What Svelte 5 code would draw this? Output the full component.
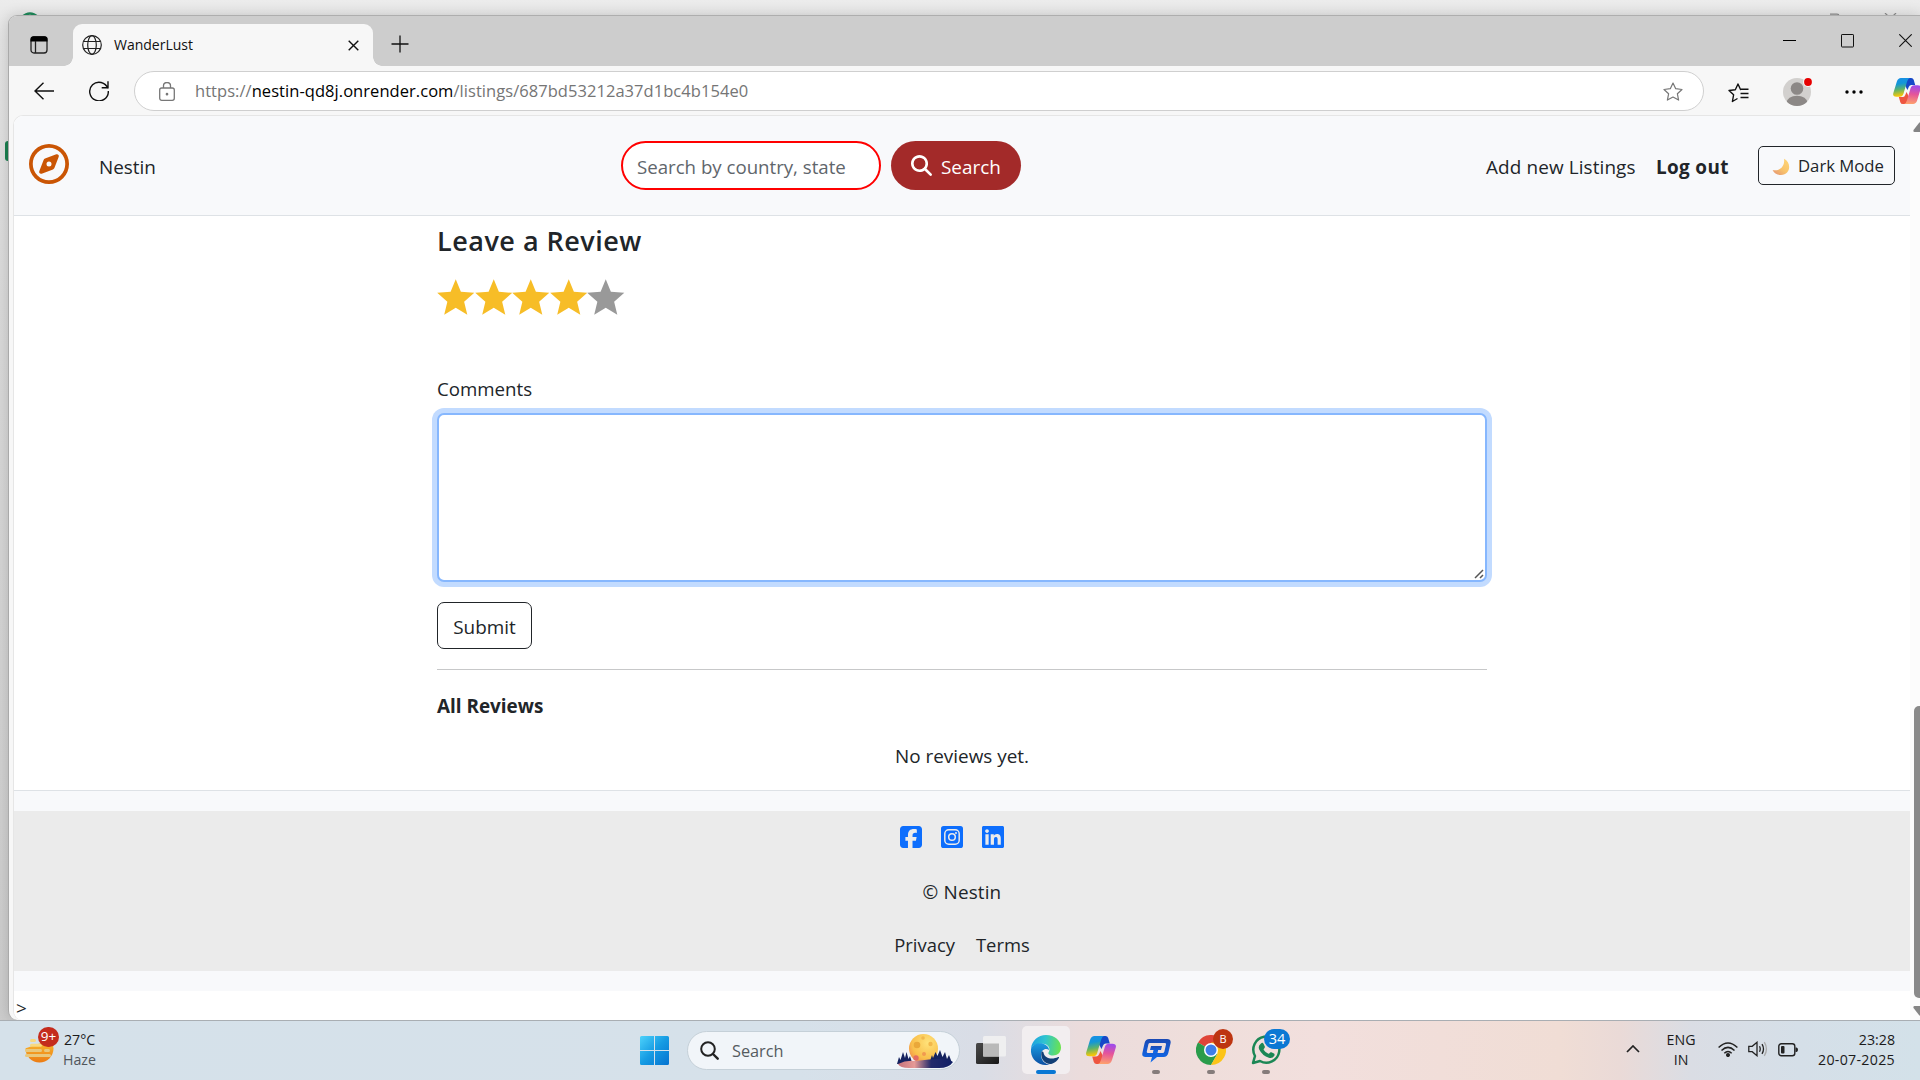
<script>
  const stars = [1, 2, 3, 4, 5];
  let rating = $state(4);
</script>

{#snippet copilot(id)}
  <svg class="copilot" viewBox="0 0 30 28">
    <defs>
      <linearGradient id="{id}a" x1="0" y1="0" x2="0.15" y2="1">
        <stop offset="0" stop-color="#1a8fe8" /><stop offset=".35" stop-color="#1396d8" /><stop offset=".65" stop-color="#5db36b" /><stop offset="1" stop-color="#fbc805" />
      </linearGradient>
      <linearGradient id="{id}b" x1=".3" y1="0" x2=".2" y2="1">
        <stop offset="0" stop-color="#a04bea" /><stop offset=".45" stop-color="#e5549a" /><stop offset="1" stop-color="#ffa46b" />
      </linearGradient>
    </defs>
    <path d="M8.500 0H19.500q2 0 2.700 2l1.600 5.500h-4q-2 0-2.800 2L15.500 13z" fill="#1648c8" />
    <path d="M21 28H10.500q-2 0-2.700-2L6.200 20.500h4q2 0 2.800-2L14.500 15z" fill="#ee5540" />
    <path d="M8.500 0H18q-2 .5-3 4l-3.800 13q-1 3.200-4 3.200H3.500Q-.7 20.200.2 16.500L4 4Q5.300 0 8.500 0z" fill="url(#{id}a)" />
    <path d="M21.500 28H12q2-.5 3-4l3.800-13q1-3.200 4-3.200h3.700q4.200 0 3.300 3.700L26 24q-1.300 4-4.500 4z" fill="url(#{id}b)" />
  </svg>
{/snippet}

<div class="desktop">
  <div class="behind">
    <svg class="behind-logo" viewBox="0 0 18 5"><path d="M1 5Q9-2 17 5" fill="none" stroke="#1f8a5b" stroke-width="2.400" /></svg>
    <svg class="behind-ctl" viewBox="0 0 70 3"><path d="M1 1.200h7q2 0 2 2M56 0l3 3M67 0l-3 3" fill="none" stroke="#8d8d8d" stroke-width="1.200" /></svg>
    <i class="behind-mark"></i>
  </div>

  <section class="window">
    <header class="titlebar">
      <svg class="workspaces" viewBox="0 0 18 18"><rect x="1" y="1" width="16" height="16" rx="3" fill="none" stroke="#222" stroke-width="1.300" /><path d="M.5 5.500V3Q.5.300 3.500.300h11q3 0 3 2.700v2.500z" fill="#000" /><path d="M5.500 5v12" stroke="#222" stroke-width="1.300" /></svg>
      <div class="tab">
        <svg class="globe" viewBox="0 0 20 20" fill="none" stroke="#222" stroke-width="1.200"><circle cx="10" cy="10" r="9.300" /><ellipse cx="10" cy="10" rx="4.300" ry="9.300" /><path d="M1.500 6.500h17M1.500 13.500h17" /></svg>
        <span class="tab-title">WanderLust</span>
        <svg class="tab-x" viewBox="0 0 11 11"><path d="M.7.700l9.600 9.600M10.300.700L.7 10.300" stroke="#111" stroke-width="1.400" /></svg>
      </div>
      <svg class="plus" viewBox="0 0 18 18"><path d="M9 .5v17M.5 9h17" stroke="#111" stroke-width="1.300" /></svg>
      <div class="controls">
        <svg width="13" height="13" viewBox="0 0 13 13"><path d="M0 6.500h13" stroke="#000" /></svg>
        <svg width="13" height="14" viewBox="0 0 13 14"><rect x=".5" y=".5" width="12" height="12.500" rx=".6" fill="none" stroke="#111" /></svg>
        <svg width="13" height="13" viewBox="0 0 13 13"><path d="M.3.300l12.400 12.400M12.700.300L.3 12.700" stroke="#111" stroke-width="1.100" /></svg>
      </div>
    </header>

    <nav class="toolbar">
      <svg class="back" viewBox="0 0 20 18"><path d="M20 9H1M9.500.700L1 9l8.500 8.300" fill="none" stroke="#111" stroke-width="1.400" /></svg>
      <svg class="reload" viewBox="0 0 20 20"><path d="M18.800 7.500A9.300 9.300 0 1 0 19.300 10M19 .3v6.500h-6.300" fill="none" stroke="#111" stroke-width="1.400" /></svg>
      <div class="address">
        <svg class="lock" viewBox="0 0 16 19" fill="none" stroke="#777" stroke-width="1.300"><rect x=".7" y="6" width="14.600" height="12.300" rx="2" /><path d="M4.500 6V3.800a3.500 3.300 0 0 1 7 0V6" /><circle cx="8" cy="12.200" r=".7" fill="#555" /></svg>
        <span class="url">https://<b>nestin-qd8j.onrender.com</b>/listings/687bd53212a37d1bc4b154e0</span>
        <svg class="fav" viewBox="0 0 20 19"><path d="M10 1l2.700 5.700 6.300.8-4.600 4.300 1.200 6.300L10 15l-5.600 3.100 1.200-6.300L1 7.500l6.300-.8z" fill="none" stroke="#777" stroke-width="1.200" stroke-linejoin="round" /></svg>
      </div>
      <svg class="collections" viewBox="0 0 21 20"><path d="M13 6.500h-.5L10 1 7.300 6.700 1 7.500l4.600 4.300-1.200 6.700 5.100-3M13 6.300h7.500M12.500 10.500h8M12.500 14.500h8" fill="none" stroke="#111" stroke-width="1.400" stroke-linejoin="round" /></svg>
      <svg class="avatar" viewBox="0 0 30 30"><defs><clipPath id="av"><circle cx="14" cy="16" r="14" /></clipPath></defs><circle cx="14" cy="16" r="14" fill="#d2d0ce" /><circle cx="14" cy="12.500" r="6.300" fill="#8c8886" /><ellipse cx="14" cy="27" rx="10.500" ry="7.300" fill="#8c8886" clip-path="url(#av)" /><circle cx="25" cy="6" r="5" fill="#f7f7f7" /><circle cx="25" cy="6" r="3.900" fill="#e60000" /></svg>
      <svg class="more" viewBox="0 0 18 4"><circle cx="2" cy="2" r="1.700" /><circle cx="9" cy="2" r="1.700" /><circle cx="16" cy="2" r="1.700" /></svg>
      <div class="side-copilot">{@render copilot('t')}</div>
    </nav>

    <div class="viewport">
      <div class="page">
        <div class="navbar">
          <svg class="compass" viewBox="0 0 512 512"><path fill="#ca5504" d="M464 256A208 208 0 1 0 48 256a208 208 0 1 0 416 0zM0 256a256 256 0 1 1 512 0A256 256 0 1 1 0 256zm306.700 69.100L162.400 380.600c-19.400 7.500-38.500-11.600-31-31l55.500-144.300c3.300-8.500 9.900-15.100 18.400-18.400l144.300-55.500c19.400-7.500 38.500 11.600 31 31L325.100 306.700c-3.200 8.500-9.900 15.100-18.400 18.400zM288 256a32 32 0 1 0-64 0 32 32 0 1 0 64 0z" /></svg>
          <span class="brand">Nestin</span>
          <div class="search-input"><span>Search by country, state</span></div>
          <button class="search-btn">
            <svg viewBox="0 0 512 512"><path fill="#fff" d="M416 208c0 45.900-14.900 88.300-40 122.700L502.600 457.400c12.500 12.500 12.500 32.800 0 45.300s-32.800 12.500-45.300 0L330.700 376c-34.400 25.200-76.800 40-122.700 40C93.100 416 0 322.900 0 208S93.100 0 208 0S416 93.100 416 208zM208 352a144 144 0 1 0 0-288 144 144 0 1 0 0 288z" /></svg>
            <span>Search</span>
          </button>
          <span class="add">Add new Listings</span>
          <strong class="logout">Log out</strong>
          <button class="dark">
            <svg viewBox="0 0 18 18"><defs><linearGradient id="mn" x1="1" y1="0" x2=".2" y2="1"><stop offset="0" stop-color="#ffd777" /><stop offset=".6" stop-color="#f8c36b" /><stop offset="1" stop-color="#e79a72" /></linearGradient></defs><path d="M12 .8C20 5 18.500 16.500 9 17 5 17.200 2 15 .6 12c7 1.800 12.600-3.500 11.400-11.200z" fill="url(#mn)" /></svg>
            <span>Dark Mode</span>
          </button>
        </div>

        <main class="review">
          <h3>Leave a Review</h3>
          <div class="stars">
            {#each stars as n}
              <svg class:off={n > rating} viewBox="0 0 38 36" onclick={() => (rating = n)} role="presentation"><path d="M19 0l5.200 12.600 13.600 1.200-10.300 9 3.200 13.200L19 29 7.300 36l3.200-13.200-10.300-9 13.600-1.200z" /></svg>
            {/each}
          </div>
          <label for="comment">Comments</label>
          <div class="field">
            <textarea id="comment"></textarea>
            <svg class="grip" viewBox="0 0 10 10"><path d="M1 9L9 1M6 9l3-3" stroke="#555" stroke-width="1.500" /></svg>
          </div>
          <button class="submit"><span>Submit</span></button>
          <hr />
          <strong class="all">All Reviews</strong>
          <p class="none"><span>No reviews yet.</span></p>
        </main>

        <footer>
          <div class="foot">
            <div class="social">
              <svg viewBox="0 32 448 448"><path d="M64 32C28.700 32 0 60.700 0 96V416c0 35.300 28.700 64 64 64h98.200V334.200H109.400V256h52.800V222.300c0-87.100 39.400-127.500 125-127.500c16.200 0 44.200 3.200 55.700 6.400V172c-6-.6-16.500-1-29.600-1c-42 0-58.200 15.900-58.200 57.200V256h83.600l-14.400 78.200H255V480H384c35.300 0 64-28.700 64-64V96c0-35.300-28.700-64-64-64H64z" /></svg>
              <svg viewBox="0 0 22 22"><rect width="22" height="22" rx="2.600" /><g fill="none" stroke="#ebebeb" stroke-width="1.500"><rect x="3.800" y="3.800" width="14.400" height="14.400" rx="4" /><circle cx="11" cy="11" r="3.300" /></g><circle cx="15" cy="7" r="1" fill="#ebebeb" /></svg>
              <svg viewBox="0 32 448 448"><path d="M416 32H31.900C14.300 32 0 46.500 0 64.300v383.400C0 465.500 14.300 480 31.900 480H416c17.600 0 32-14.500 32-32.300V64.300c0-17.800-14.400-32.300-32-32.300zM135.400 416H69V202.200h66.500V416zm-33.200-243c-21.300 0-38.500-17.300-38.500-38.500S80.900 96 102.200 96c21.200 0 38.500 17.300 38.500 38.500 0 21.300-17.200 38.500-38.500 38.500zm282.100 243h-66.400V312c0-24.800-.5-56.700-34.500-56.700-34.600 0-39.900 27-39.900 54.900V416h-66.400V202.200h63.700v29.200h.9c8.900-16.800 30.600-34.500 62.200-34.500 66.500 0 78.900 43.800 78.900 100.900V416z" /></svg>
            </div>
            <div class="copy"><span>© Nestin</span></div>
            <div class="links"><span class="privacy">Privacy</span><span class="terms">Terms</span></div>
          </div>
        </footer>
        <div class="stray"><span>&gt;</span></div>
      </div>
      <div class="scrollbar">
        <svg class="arrow" viewBox="0 0 16 10"><path d="M8 0Q9 0 10 1l5.500 7q.5 2-1 2H1.500q-1.500 0-1-2L6 1q1-1 2-1z" fill="#858585" /></svg>
        <i class="thumb"></i>
        <svg class="arrow down" viewBox="0 0 16 10"><path d="M8 0Q9 0 10 1l5.500 7q.5 2-1 2H1.500q-1.500 0-1-2L6 1q1-1 2-1z" fill="#858585" /></svg>
      </div>
    </div>
  </section>

  <div class="taskbar">
    <div class="weather">
      <div class="haze">
        <svg viewBox="0 0 30 28"><defs><linearGradient id="sun" x1="0" y1="0" x2="0" y2="1"><stop offset=".3" stop-color="#f8b52d" /><stop offset="1" stop-color="#ec7c14" /></linearGradient><clipPath id="low"><path d="M0 12.500L16 7l14-3v24H0z" /></clipPath></defs><circle cx="14.500" cy="12.500" r="14" fill="url(#sun)" clip-path="url(#low)" /><g stroke="#f8d97f" stroke-width="3" stroke-linecap="round"><path d="M6.500 4.500h3M6.500 9.300h9" /><path d="M1.500 14.500h14M20.500 14.500h3M1.500 19.500h23" stroke="#e9c87c" /></g></svg>
        <span class="badge nine">9+</span>
      </div>
      <div class="temps"><span class="deg">27°C</span><span class="cond">Haze</span></div>
    </div>

    <div class="apps">
      <svg class="win" viewBox="0 0 29 29"><defs><linearGradient id="wn" x1="0" y1="0" x2="1" y2="1" ><stop offset="0" stop-color="#4dd2fb" /><stop offset=".5" stop-color="#159be3" /><stop offset="1" stop-color="#0572d0" /></linearGradient></defs><path d="M1.500 0H14v14H0V1.500Q0 0 1.500 0zM15 0h12.500Q29 0 29 1.500V14H15zM0 15h14v14H1.500Q0 29 0 27.500zM15 15h14v12.500q0 1.500-1.500 1.500H15z" fill="url(#wn)" /></svg>
      <div class="task-search">
        <svg class="lens" viewBox="0 0 19 19"><circle cx="8" cy="8" r="6.800" fill="none" stroke="#222" stroke-width="2" /><path d="M13 13l4.700 4.700" stroke="#222" stroke-width="2.400" stroke-linecap="round" /></svg>
        <span>Search</span>
        <svg class="moon" viewBox="0 0 56 34">
          <defs><radialGradient id="mg" cx=".65" cy=".3" r=".9"><stop offset="0" stop-color="#ffe27a" /><stop offset=".6" stop-color="#f9c04c" /><stop offset="1" stop-color="#ee7a4a" /></radialGradient><linearGradient id="lk"><stop offset="0" stop-color="#c5737c" /><stop offset=".3" stop-color="#e59a96" /><stop offset=".6" stop-color="#232a6b" /><stop offset="1" stop-color="#0f1f66" /></linearGradient></defs>
          <circle cx="26.500" cy="14.500" r="14.500" fill="url(#mg)" />
          <circle cx="20" cy="11" r="3.300" fill="#eaa83a" /><circle cx="33.500" cy="10" r="2.200" fill="#f2b84c" /><circle cx="26" cy="4" r="1.800" fill="#f2b84c" /><circle cx="27" cy="20" r="2" fill="#f09a50" /><circle cx="19" cy="24" r="2.700" fill="#e36b62" />
          <path d="M0 30l2-7 1.500 3L6 18l2 6 1.500-6 2 7 1.500-3 2.500 8zM33 27l2-6 1 3 2.500-6 2 4L43 16l2.500 7L48 18l2 7 2-4 3 8z" fill="#14225f" />
          <path d="M1 30q8-4 17-3 16-2 24-2 10 0 14 3-4 6-14 6H12Q3 34 1 30z" fill="url(#lk)" />
        </svg>
      </div>
      <svg class="views" viewBox="0 0 30 28"><defs><linearGradient id="tv" x1="0" y1="0" x2="1" y2="1"><stop offset="0" stop-color="#4a4a4a" /><stop offset="1" stop-color="#171717" /></linearGradient></defs><rect y="7" width="23" height="21" rx="1.500" fill="url(#tv)" /><rect x="7" width="23" height="20.500" rx="1.500" fill="#efeff0" /><path d="M7 7.500h16v13H7z" fill="#b9b9b9" /></svg>
      <div class="app edge active">
        <svg viewBox="0 0 30 30">
          <defs><linearGradient id="e1" x1="0" y1=".4" x2="1" y2=".5"><stop offset="0" stop-color="#1da1e0" /><stop offset=".45" stop-color="#2fc4d0" /><stop offset="1" stop-color="#6be34e" /></linearGradient><linearGradient id="e2" x1="0" y1="0" x2="0" y2="1"><stop offset="0" stop-color="#1b9de2" /><stop offset="1" stop-color="#0b4fa3" /></linearGradient></defs>
          <path d="M0 13.500C1 5.500 7 0 15 0c9 0 15 6 15 12.500 0 5-3.500 8-8 8-4 0-5-1.800-4.500-3 2-2.500 1-7.500-4-8.500C8 8 2 9.500 0 13.500z" fill="url(#e1)" />
          <path d="M0 14C1.500 9.500 7 7.500 12 8.700c3.500.9 6 3.500 6 6.300-3-2.500-8-.5-8 5 0 5 4 9.500 9 9.500C9 32-1 25 0 14z" fill="url(#e2)" />
          <path d="M10.300 17.500c-.8 7 4.200 12.500 10.700 11.300 3-1 5.500-3.300 7-6 .3-.8-.3-1-.9-.7-6 3-13.600 1.400-14.600-4.600-.3-1.500-1.900-1.500-2.200 0z" fill="#123f76" />
        </svg>
        <i></i>
      </div>
      <div class="app cop">{@render copilot('b')}</div>
      <div class="app chat"><svg viewBox="0 0 29 24"><defs><linearGradient id="ct" x1="0" y1="0" x2="0" y2="1"><stop offset="0" stop-color="#1a49b4" /><stop offset="1" stop-color="#0f6cf0" /></linearGradient></defs><path d="M7.500 0H25Q29.500 0 28.500 4.500L26.300 14Q25.300 18 21.500 18H15L8.500 23.500 10 18H3.500Q-.5 18 .4 14L2.600 4Q3.500 0 7.500 0zM8 4Q6.700 4 6.400 5.200L4.800 12.500Q4.500 14 6 14H11L12.300 8.500H16.700L15.500 14H20.500Q22 14 22.400 12.500L24 5.500Q24.300 4 22.800 4z" fill="url(#ct)" fill-rule="evenodd" /><path d="M8 11l1-4h11l-1 4h-3.500l-.8 3H11l.8-3z" fill="url(#ct)" /></svg><i></i></div>
      <div class="app chrome">
        <svg viewBox="0 0 30 30"><path d="M15 15L2 7.500A15 15 0 0 1 28 7.500z" fill="#e04438" /><path d="M15 15L2 7.500A15 15 0 0 0 15 30l6.500-11.200z" fill="#2a9c4b" /><path d="M21.500 18.800L15 30A15 15 0 0 0 28 7.500H15z" fill="#fcc418" /><circle cx="15" cy="15" r="7" fill="#fff" /><circle cx="15" cy="15" r="5.500" fill="#3f7ee8" /></svg>
        <span class="badge bee">B</span><i></i>
      </div>
      <div class="app whats">
        <svg viewBox="0 0 30 30"><path d="M2 28l2-7A13 13 0 1 1 9 26z" fill="none" stroke="#1b8755" stroke-width="2.500" stroke-linejoin="round" /><path d="M10 8.500q1.500-1.500 2.500.3l1.300 2.700q.4 1-.8 2.200-.7.700 0 1.500 1.500 2.300 4 3.400.8.400 1.400-.4 1-1.400 2-.9l2.600 1.300q1 .6.300 2.200-1.800 3-5.500 2-6.300-1.800-9.600-8.200-1.500-4 1.800-6.100z" fill="#1b8755" /></svg>
        <span class="badge count">34</span><i></i>
      </div>
    </div>

    <div class="tray">
      <svg class="chev" viewBox="0 0 14 8"><path d="M1 7l6-6 6 6" fill="none" stroke="#222" stroke-width="1.700" /></svg>
      <div class="lang"><span class="eng">ENG</span><span>IN</span></div>
      <svg class="wifi" viewBox="0 0 20 15" fill="none" stroke="#222" stroke-width="1.500"><path d="M.6 5.500q9.400-9 18.800 0M3.500 8.500q6.500-6.200 13 0M6.300 11.300q3.700-3.500 7.400 0" /><circle cx="10" cy="13" r="1.300" fill="#222" /></svg>
      <svg class="vol" viewBox="0 0 20 16" fill="none" stroke="#222" stroke-width="1.300"><path d="M.8 5.300h3.400L9 1.300v13.400l-4.800-4H.8zM11.500 5.200q1.500 2.800 0 5.600M14 3.200q3 4.800 0 9.600" /><path d="M16.300 1.200q4.300 6.800 0 13.600" stroke="#aaa" /></svg>
      <svg class="batt" viewBox="0 0 20 14"><rect x=".8" y=".8" width="16" height="12" rx="2.500" fill="none" stroke="#222" stroke-width="1.400" /><rect x="3" y="3" width="3.500" height="7.600" rx="1" fill="#222" /><path d="M17.500 4.500h1q1.500.5 1.500 2.300t-1.500 2.300h-1z" fill="#222" /></svg>
      <div class="clock"><span class="time">23:28</span><span class="date">20-07-2025</span></div>
    </div>
  </div>
</div>

<style>
  :global(body) { overflow: hidden; }
  .desktop, .desktop * { box-sizing: border-box; }
  .desktop {
    position: relative; width: 1920px; height: 1080px; overflow: hidden;
    display: grid; grid-template-rows: 15px 1005px 60px;
    background: linear-gradient(#ececec, #e3e3e3 40px, #dadada 300px, #cbcbcb);
    font-family: "Open Sans", "Noto Sans", sans-serif; color: #212529;
    font-size: 18.900px; line-height: 30px;
  }
  span, strong { white-space: nowrap; }
  svg { display: block; flex: none; }
  button { font: inherit; color: inherit; margin: 0; padding: 0; }

  .behind { height: 15px; }
  .behind-logo { position: absolute; left: 21px; top: 12px; width: 18px; }
  .behind-ctl { position: absolute; left: 1829px; top: 13px; width: 70px; }
  .behind-mark { position: absolute; left: 5px; top: 141px; width: 6px; height: 20px; border-radius: 3px; background: #1b8050; }

  .window {
    position: relative; margin-left: 8px; background: #f7f7f7;
    border-left: 1px solid #a9a9a9; border-top: 1px solid #aeaeae;
    border-radius: 9px 0 0 9px; overflow: hidden; display: grid; grid-template-rows: 50px 49px 1fr;
    box-shadow: 0 0 14px rgb(0 0 0 / .16);
  }
  .titlebar { background: #cdcdcd; display: flex; align-items: flex-end; }
  .workspaces { width: 18px; height: 18px; margin: 0 25px 12px 21px; }
  .tab {
    position: relative; width: 300px; height: 42px; background: #f7f7f7; border-radius: 9px 9px 0 0;
    display: flex; align-items: center; padding: 0 14px 0 9px;
  }
  .tab::before, .tab::after { content: ""; position: absolute; bottom: 0; width: 9px; height: 9px; }
  .tab::before { left: -9px; background: radial-gradient(circle at 0 0, #cdcdcd 8.500px, #f7f7f7 9px); }
  .tab::after { right: -9px; background: radial-gradient(circle at 100% 0, #cdcdcd 8.500px, #f7f7f7 9px); }
  .globe { width: 20px; height: 20px; margin-right: 12px; }
  .tab-title { flex: 1; font-size: 14px; color: #111; }
  .tab-x { width: 11px; height: 11px; margin-top: 1px; }
  .plus { width: 18px; height: 18px; margin: 0 0 13px 18px; }
  .controls { margin-left: auto; display: flex; gap: 45px; padding: 0 10px 18px 0; }

  .toolbar { display: flex; align-items: center; }
  .back { width: 20px; height: 18px; margin-left: 25px; }
  .reload { width: 20px; height: 20px; margin: 0 25px 0 35px; }
  .address {
    width: 1570px; height: 40px; border: 1px solid #cfcfcf; border-radius: 20px; background: #fff;
    display: flex; align-items: center; padding: 0 20px 0 24px; margin-top: 1px;
  }
  .lock { width: 16px; height: 19px; margin-right: 20px; }
  .url { flex: 1; font-size: 16.500px; letter-spacing: .05px; color: #757575; }
  .url b { font-weight: 400; color: #000; }
  .fav { width: 20px; height: 19px; }
  .collections { width: 21px; height: 20px; margin: 4px 0 0 24px; }
  .avatar { width: 30px; height: 30px; margin: 0 0 0 34px; }
  .more { width: 18px; height: 4px; margin: 3px 0 0 32px; }
  .side-copilot { width: 30px; height: 26px; margin-left: 29px; flex: none; }
  .copilot { width: 100%; height: 100%; }

  .viewport { display: grid; grid-template-columns: 1896px 1fr; margin-left: 4px; border: 1px solid #e6e6e6; border-width: 1px 0 0 1px; border-radius: 10px 0 0 9px; overflow: hidden; background: #fcfcfc; }
  .page { background: #fff; }
  .navbar { height: 100px; background: #f8f9fb; border-bottom: 1px solid #dee2e6; display: flex; align-items: center; padding: 0 15px; }
  .compass { width: 40px; height: 40px; margin: -3px 30px 0 0; }
  .brand { width: 522px; margin-top: 3px; }
  .search-input { width: 260px; height: 49px; border: 2px solid #f00; border-radius: 24.500px; background: #fff; padding: 9px 33px 0 14px; margin: 0 10px 0 0; color: #5f666c; font-size: 18.700px; letter-spacing: -.02px; }
  .search-input span { display: block; overflow: hidden; }
  .search-btn { width: 130px; height: 49px; border: 0; border-radius: 24.500px; background: #a32a29; color: #fff; display: flex; align-items: center; padding: 3px 0 0 20px; }
  .search-btn svg { width: 21px; height: 21px; margin: -3px 9px 0 0; }
  .add { margin: 3px 0 0 465px; width: 170px; letter-spacing: .12px; }
  .logout { margin-top: 3px; width: 102px; font-weight: 700; letter-spacing: .35px; }
  .dark { width: 137px; height: 39px; border: 1px solid #212529; border-radius: 5px; background: transparent; font-size: 16.700px; display: flex; align-items: center; padding-left: 13px; }
  .dark svg { width: 18px; height: 18px; margin: 2px 8px 0 0; }

  .review { width: 1050px; margin: 0 auto; height: 574px; padding: 8px 0 0; }
  h3 { margin: 0; height: 34px; line-height: 34px; font-size: 27px; font-weight: 600; letter-spacing: .5px; }
  .stars { display: flex; height: 36px; margin: 21px 0 59px; }
  .stars svg { width: 37.500px; height: 36px; fill: #f7bd27; }
  .stars svg.off { fill: #999; }
  label { display: block; height: 30px; font-size: 18.700px; }
  .field { position: relative; height: 169px; margin-top: 9px; }
  textarea { display: block; width: 100%; height: 169px; resize: none; outline: 0; border: 2px solid #86b7fe; border-radius: 7px; box-shadow: 0 0 0 5px #c2dbff; background: #fff; }
  .grip { position: absolute; right: 3px; bottom: 3px; width: 10px; height: 10px; }
  .submit { display: block; width: 95px; height: 47px; border: 1px solid #212529; border-radius: 7px; background: #fff; margin: 20px 0; padding: 2px 0 0; }
  hr { margin: 0 0 21px; border: 0; height: 1px; background: #c7c8c9; }
  .all { display: block; font-weight: 700; }
  .none { margin: 20px 0 0; text-align: center; }

  footer { height: 201px; background: #f8f9fb; border-top: 1px solid #dee2e6; padding: 20px 0; }
  .foot { height: 160px; background: #ebebeb; padding-top: 15px; display: grid; grid-template-rows: 52px 53px 30px; justify-content: center; }
  .social { display: flex; gap: 19px; fill: #0d6efd; padding-left: 6px; }
  .social svg { width: 22px; height: 22px; }
  .copy { text-align: center; margin-top: -1px; letter-spacing: .15px; }
  .links { display: flex; gap: 21px; margin-top: -1px; font-size: 18.400px; }
  .stray { padding: 2px 0 0 2px; height: 30px; }
  .scrollbar { padding: 6px 0 0 3px; overflow: hidden; }
  .arrow { width: 16px; height: 10px; }
  .arrow.down { transform: rotate(180deg); margin-top: 8px; }
  .thumb { display: block; width: 13px; height: 292px; margin: 574px 0 0 1px; border-radius: 5px; background: #8a8a8a; }

  .taskbar {
    position: relative; border-top: 1px solid #a9aeb3; display: grid; grid-template-columns: 640px 1fr auto; color: #1b1b1b;
    background: linear-gradient(90deg, #d5e1ea 0, #d6e1ea 800px, #d9dde6 980px, #ebdcdc 1080px, #efdedb 1200px, #f2dfdd 1320px, #f0ddd5 1560px, #eadad7 1620px, #dadde4 1690px, #d5dfe8 1800px, #d3e1e9 1920px);
  }
  .weather { display: flex; padding: 15px 0 0 25px; }
  .haze { position: relative; width: 39px; }
  .haze svg { width: 30px; height: 28px; }
  .badge { position: absolute; border-radius: 10px; color: #fff; height: 20px; line-height: 19px; text-align: center; }
  .nine { left: 13px; top: -9px; width: 21px; background: #c42b1c; font-size: 13.500px; }
  .temps, .lang, .clock { display: flex; flex-direction: column; font-size: 14.200px; line-height: 20px; }
  .temps { margin-top: -6px; }
  .cond { color: #50565b; margin-left: -1px; }
  .apps { display: flex; align-items: flex-start; }
  .win { width: 29px; height: 29px; margin: 15px 18px 0 0; }
  .task-search { width: 273px; height: 39px; margin-top: 10px; border: 1px solid #c5d0d8; border-radius: 20px; background: #f1f5f9; display: flex; align-items: center; padding-left: 12px; font-size: 16.300px; color: #555b60; }
  .lens { width: 19px; height: 19px; margin-right: 13px; }
  .moon { width: 56px; height: 34px; margin: 0 6px 0 auto; }
  .views { width: 30px; height: 28px; margin: 15px 16px 0; }
  .app { position: relative; width: 48px; height: 48px; margin: 5px 7px 0 0; display: flex; justify-content: center; border-radius: 5px; padding-top: 9px; }
  .app > svg { width: 30px; height: 30px; }
  .app > i { position: absolute; left: 20px; bottom: 0; width: 8px; height: 4px; border-radius: 2px; background: #857c7b; }
  .edge { background: #f2eef0; }
  .edge > i { left: 14px; width: 20px; background: #0a78d4; }
  .cop :global(svg) { width: 30px; height: 28px; margin-top: 1px; }
  .chat > svg { width: 29px; height: 24px; margin-top: 4px; }
  .bee { left: 26px; top: 3px; width: 20px; background: #bd3511; font-size: 11px; line-height: 20px; }
  .count { left: 22px; top: 3px; width: 26px; background: #0a78d4; font-size: 14.500px; }
  .tray { display: flex; padding-right: 25px; }
  .chev { width: 14px; height: 8px; margin: 24px 27px 0 0; }
  .lang { align-items: center; width: 28px; margin: 9px 23px 0 0; }
  .wifi { width: 20px; height: 15px; margin: 21px 10px 0 0; }
  .vol { width: 20px; height: 16px; margin: 20px 10px 0 0; }
  .batt { width: 20px; height: 14px; margin: 22px 21px 0 0; }
  .clock { align-items: flex-end; margin-top: 9px; width: 76px; }
  .date { letter-spacing: .3px; }
</style>
